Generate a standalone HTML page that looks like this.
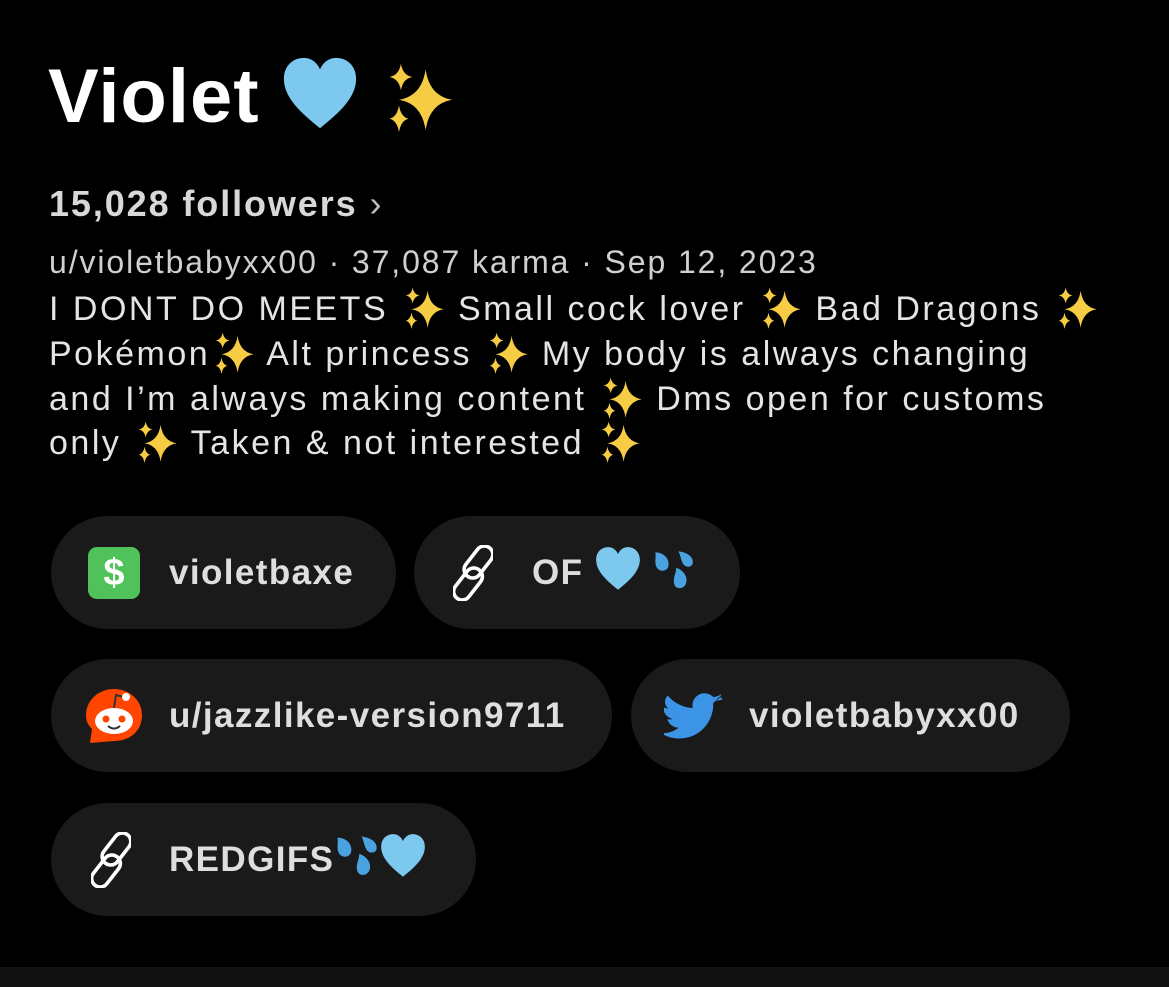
<!DOCTYPE html>
<html><head><meta charset="utf-8"><style>
*{margin:0;padding:0;box-sizing:border-box}
body{width:1169px;height:987px;background:#000;position:relative;overflow:hidden;font-family:"Liberation Sans",sans-serif;color:#e6e6e6}
.a{position:absolute;white-space:nowrap}
.sp{display:inline-block;width:46px;height:46px;vertical-align:-10px}
.chip{position:absolute;height:113px;border-radius:57px;background:#1a1a1a}
.ct{position:absolute;top:0;line-height:113px;font-size:35px;letter-spacing:1.4px;font-weight:bold;color:#dedede;white-space:nowrap}
.bio{font-size:34px;letter-spacing:2.5px;line-height:45px;color:#e4e4e4}
</style></head><body>
<svg width="0" height="0" style="position:absolute">
<defs>
<symbol id="s" viewBox="0 0 40 40"><g fill="#f7cc45">
<path d="M24 6 Q26 20 38 22 Q26 24 24 38 Q22 24 10 22 Q22 20 24 6Z"/>
<path d="M11 3 Q12 9 17 10 Q12 11 11 17 Q10 11 5 10 Q10 9 11 3Z"/>
<path d="M10 25 Q11 31 15 32 Q11 33 10 39 Q9 33 5 32 Q9 31 10 25Z"/></g></symbol>
<symbol id="h" viewBox="0 0 40 40"><path d="M20 38 C10 30 1 22 1 12 C1 5 6 1 11.5 1 C15.5 1 18.5 3.5 20 7 C21.5 3.5 24.5 1 28.5 1 C34 1 39 5 39 12 C39 22 30 30 20 38Z" fill="#7cc8ef"/></symbol>
<symbol id="d" viewBox="0 0 40 40"><g fill="#4aa3e0"><path d="M3 4 C10 4 16 9 15 16 C14 22 6 22 4 17 C2 13 4 8 3 4Z"/><path d="M24 3 C32 4 38 8 37 14 C36 18 30 18 28 14 C26 10 26 7 24 3Z"/><path d="M22 18 C28 20 33 26 31 32 C29 38 21 38 20 32 C19 27 22 23 22 18Z"/></g></symbol>
<symbol id="l" viewBox="0 0 40 56"><g fill="none" stroke="#fff" stroke-width="3.6"><rect x="17" y="-1" width="17" height="36" rx="8.5" transform="rotate(38 25.5 17)"/><rect x="6.5" y="21" width="17" height="36" rx="8.5" transform="rotate(38 15 39)"/></g></symbol>
</defs></svg>

<div class="a" style="left:48px;top:52px;font-size:76px;letter-spacing:1px;font-weight:bold;color:#fff;line-height:90px">Violet <svg style="width:76px;height:76px;vertical-align:-10px"><use href="#h"/></svg> <svg style="width:76px;height:76px;vertical-align:-12px"><use href="#s"/></svg></div>

<div class="a" style="left:49px;top:184px;font-size:36px;letter-spacing:1.9px;font-weight:bold;color:#d8d8d8;line-height:40px">15,028 followers <span style="font-weight:normal;color:#bbb">›</span></div>

<div class="a" style="left:49px;top:243px;font-size:32px;letter-spacing:1.9px;color:#cfcfcf;line-height:38px">u/violetbabyxx00 · 37,087 karma · Sep 12, 2023</div>

<div class="a bio" style="left:49px;top:284px">I DONT DO MEETS <svg class="sp"><use href="#s"/></svg> Small cock lover <svg class="sp"><use href="#s"/></svg> Bad Dragons <svg class="sp"><use href="#s"/></svg></div>
<div class="a bio" style="left:49px;top:329px">Pokémon<svg class="sp"><use href="#s"/></svg> Alt princess <svg class="sp"><use href="#s"/></svg> My body is always changing</div>
<div class="a bio" style="left:49px;top:374px">and I’m always making content <svg class="sp"><use href="#s"/></svg> Dms open for customs</div>
<div class="a bio" style="left:49px;top:418px">only <svg class="sp"><use href="#s"/></svg> Taken &amp; not interested <svg class="sp"><use href="#s"/></svg></div>

<div class="chip" style="left:51px;top:516px;width:345px">
<div style="position:absolute;left:37px;top:31px;width:52px;height:52px;border-radius:9px;background:#4fc25a;color:#fff;font-weight:bold;font-size:38px;text-align:center;line-height:52px">$</div>
<div class="ct" style="left:118px">violetbaxe</div></div>

<div class="chip" style="left:414px;top:516px;width:326px">
<svg style="position:absolute;left:39px;top:29px;width:40px;height:56px" viewBox="0 0 40 56"><use href="#l"/></svg>
<div class="ct" style="left:118px">OF <svg style="width:46px;height:46px;vertical-align:-8px"><use href="#h"/></svg> <svg style="width:44px;height:44px;vertical-align:-8px"><use href="#d"/></svg></div></div>

<div class="chip" style="left:51px;top:659px;width:561px">
<svg style="position:absolute;left:33px;top:26px;width:60px;height:62px" viewBox="0 0 60 62">
<path d="M30 4 C46 4 58 16 58 30 C58 46 46 56 30 56 L6 58 L8 44 C4 40 2 36 2 30 C2 16 14 4 30 4Z" fill="#ff4500"/>
<ellipse cx="30" cy="36" rx="19" ry="13" fill="#fff"/>
<circle cx="22" cy="34" r="3.5" fill="#ff4500"/><circle cx="38" cy="34" r="3.5" fill="#ff4500"/>
<path d="M24 41 Q30 46 36 41" stroke="#333" stroke-width="2" fill="none"/>
<path d="M30 23 L32 10 L40 12" stroke="#333" stroke-width="2" fill="none"/><circle cx="42" cy="12" r="4" fill="#fff"/></svg>
<div class="ct" style="left:118px">u/jazzlike-version9711</div></div>

<div class="chip" style="left:631px;top:659px;width:439px">
<svg style="position:absolute;left:33px;top:33px;width:60px;height:52px" viewBox="0 0 24 20"><path fill="#3b94e6" d="M23.6 2.4c-.9.4-1.8.6-2.8.8 1-.6 1.8-1.6 2.1-2.7-.9.6-2 1-3.1 1.2C18.9.7 17.6.1 16.2.1c-2.7 0-4.8 2.2-4.8 4.8 0 .4 0 .8.1 1.1C7.4 5.8 3.9 3.9 1.5 1-.1 2.6.1 5 1.8 6.2c-.8 0-1.5-.2-2.2-.6 0 2.3 1.7 4.3 3.9 4.8-.7.2-1.5.2-2.2.1.6 1.9 2.4 3.3 4.5 3.4-2 1.6-4.6 2.4-7.1 2.1 2.2 1.4 4.8 2.2 7.4 2.2 8.9 0 13.9-7.5 13.6-14.2.9-.7 1.7-1.5 2.3-2.5z"/></svg>
<div class="ct" style="left:118px">violetbabyxx00</div></div>

<div class="chip" style="left:51px;top:803px;width:425px">
<svg style="position:absolute;left:40px;top:29px;width:40px;height:56px" viewBox="0 0 40 56"><use href="#l"/></svg>
<div class="ct" style="left:118px">REDGIFS<svg style="width:46px;height:46px;vertical-align:-8px"><use href="#d"/></svg><svg style="width:46px;height:46px;vertical-align:-8px"><use href="#h"/></svg></div></div>

<div style="position:absolute;left:0;top:967px;width:1169px;height:20px;background:#121212"></div>
</body></html>
